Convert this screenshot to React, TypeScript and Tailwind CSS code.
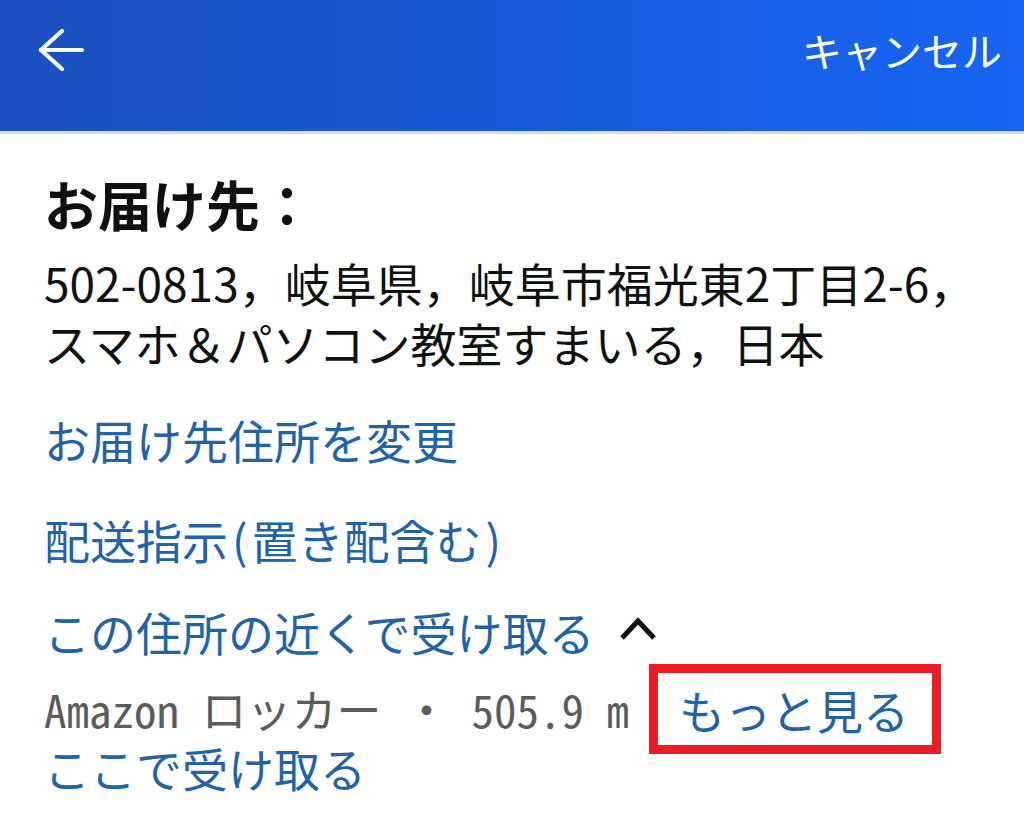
import React from "react";

const JP = "font-['Noto_Sans_CJK_JP','Noto_Sans',sans-serif]";

export default function App() {
  return (
    <div className={`w-[1024px] h-[834px] bg-white overflow-hidden ${JP}`}>
      <header className="h-[134px] border-b-[3px] border-[#dcdcdc] bg-gradient-to-r from-[#1a4fbd] to-[#1665f3]">
        <div className="h-[100px] flex items-center justify-between pl-[37px] pr-[22px]">
          <svg width="48" height="48" viewBox="0 0 48 48" fill="none" stroke="white" strokeWidth="4.2" strokeLinecap="round" strokeLinejoin="round">
            <path d="M45 24H4" />
            <path d="M25 5L4 24L25 43" />
          </svg>
          <span className="text-[40px] leading-[40px] text-white">キャンセル</span>
        </div>
      </header>

      <main className="px-[44px] pt-[40px] text-[#0f1111]">
        <h1 className="text-[54px] leading-[60px] font-bold">お届け先：</h1>
        <p className="mt-[18px] text-[46px] leading-[60px]">
          502-0813，岐阜県，岐阜市福光東2丁目2-6，
          <br />
          スマホ＆パソコン教室すまいる，日本
        </p>

        <div className="mt-[37px] text-[46px] leading-[60px] text-[#2063a8]">お届け先住所を変更</div>
        <div className="mt-[40px] text-[46px] leading-[60px] text-[#2063a8]">
          配送指示<span className="px-[4px]">(</span>置き配含む<span className="px-[4px]">)</span>
        </div>
        <div className="mt-[32px] flex items-center text-[46px] leading-[60px]">
          <span className="text-[#2063a8]">この住所の近くで受け取る</span>
          <svg className="ml-[24px] mt-[-4px]" width="38" height="24" viewBox="0 0 38 24" fill="none" stroke="#111" strokeWidth="5" strokeLinejoin="miter">
            <path d="M3 21L19 4L35 21" />
          </svg>
        </div>
        <div className="mt-[20px] h-[56px] flex items-center">
          <span className="text-[45px] leading-[46px] text-[#5a5c5c] whitespace-pre [font-feature-settings:'hwid']">Amazon ロッカー ・ 505.9 m</span>
          <span className="ml-[20px] -my-[17px] border-[9px] border-[#ec1c24] pl-[21px] pr-[23px] h-[90px] flex items-center text-[46px] leading-[46px] text-[#2063a8]">もっと見る</span>
        </div>
        <div className="mt-[4px] text-[46px] leading-[52px] text-[#2063a8]">ここで受け取る</div>
      </main>
    </div>
  );
}
